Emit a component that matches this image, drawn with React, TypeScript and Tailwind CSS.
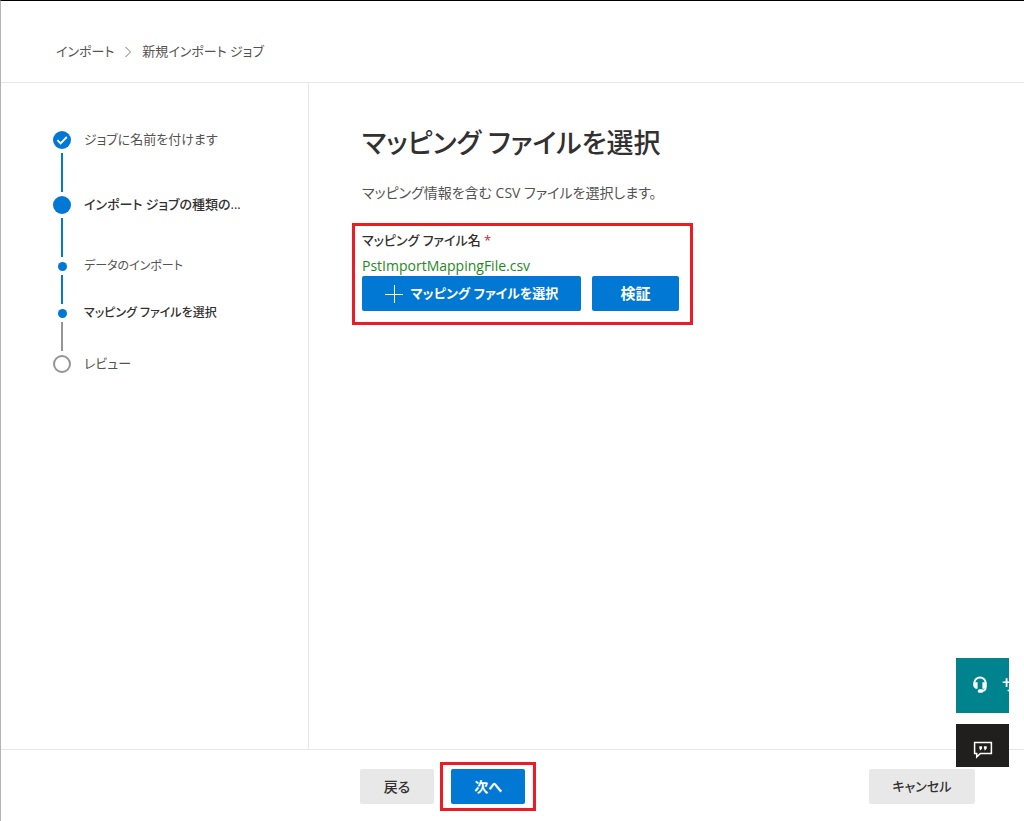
import { Fragment } from 'react';
import clsx from 'clsx';

type StepState = 'done' | 'current' | 'sub' | 'todo';

interface Step {
  label: string;
  state: StepState;
  bold?: boolean;
}

const STEPS: Step[] = [
  { label: 'ジョブに名前を付けます', state: 'done' },
  { label: 'インポート ジョブの種類の...', state: 'current', bold: true },
  { label: 'データのインポート', state: 'sub' },
  { label: 'マッピング ファイルを選択', state: 'sub', bold: true },
  { label: 'レビュー', state: 'todo' },
];

function StepMarker({ state }: { state: StepState }) {
  if (state === 'todo') {
    return <span className="size-[18px] rounded-full border-2 border-[#979593]" />;
  }
  if (state === 'sub') {
    return <span className="size-[9px] rounded-full bg-[#0078d4]" />;
  }
  return (
    <span className="flex size-[18px] items-center justify-center rounded-full bg-[#0078d4]">
      {state === 'done' && (
        <svg viewBox="0 0 18 18" className="size-[18px]" fill="none" stroke="white" strokeWidth="1.8">
          <path d="M4.4 9.2 7.6 12.4 13.8 6" />
        </svg>
      )}
    </span>
  );
}

function StepNav() {
  return (
    <nav aria-label="ステップ" className="w-[308px] shrink-0 border-r border-[#e6e6e6] pt-11 pl-[51px]">
      <ol>
        {STEPS.map((step, i) => {
          const small = step.state === 'sub';
          const next = STEPS[i + 1];
          return (
            <Fragment key={step.label}>
              <li className={clsx('flex items-center gap-3', small ? 'h-[18px]' : 'h-[26px]')}>
                <span className="flex w-5 shrink-0 justify-center">
                  <StepMarker state={step.state} />
                </span>
                <span
                  className={clsx(
                    'whitespace-nowrap',
                    small ? 'text-[12px]' : 'text-[13px]',
                    step.bold ? 'font-medium text-[#323130]' : 'text-[#555352]',
                  )}
                >
                  {step.label}
                </span>
              </li>
              {next && (
                <li aria-hidden="true" className="flex w-5 justify-center">
                  <span
                    className={clsx(
                      'w-0.5',
                      small ? 'h-[29px]' : 'h-[39px]',
                      next.state === 'todo' ? 'bg-[#979593]' : 'bg-[#0078d4]',
                    )}
                  />
                </li>
              )}
            </Fragment>
          );
        })}
      </ol>
    </nav>
  );
}

function SupportWidgets() {
  return (
    <div className="fixed right-[15px] bottom-[54px] flex w-[53px] flex-col gap-[11px]">
      <button
        type="button"
        aria-label="サポート"
        className="flex h-[55px] items-center gap-3.5 overflow-hidden bg-[#00838c] pb-0.5 pl-4 text-[15px] font-medium text-white"
      >
        <svg viewBox="0 0 16 18" className="h-[18px] w-4 shrink-0" fill="none" stroke="white">
          <path d="M2.4 10V6.6a5.6 5.2 0 0 1 11.2 0v4.6c0 2.2-1.2 3.6-3.6 3.6" strokeWidth="2" />
          <path d="M1.6 6.2h4v6.6H3.6L1.6 11zM10.4 6.2h4V11l-2 1.8h-2z" fill="white" stroke="none" />
          <rect x="5.8" y="13.2" width="5.4" height="3.6" rx="1.6" fill="white" stroke="none" />
        </svg>
        <span className="shrink-0">サ</span>
      </button>
      <button
        type="button"
        aria-label="フィードバック"
        className="flex h-[43px] items-center justify-center bg-[#201f1e] pt-2"
      >
        <svg viewBox="0 0 20 18" className="h-[18px] w-5" fill="none" stroke="white" strokeWidth="1.5">
          <path d="M1.6 1.6h16.8v10.8H7.4l-3.7 3.5v-3.5H1.6z" />
          <path d="M6.3 5.3h2.8v2.2L7.6 9.2h-1l.5-1.4h-.8zM10.9 5.3h2.8v2.2l-1.5 1.7h-1l.5-1.4h-.8z" fill="white" stroke="none" />
        </svg>
      </button>
    </div>
  );
}

export default function App() {
  return (
    <div className="flex min-h-screen flex-col border-t border-l border-t-black border-l-[#b5b5b5] bg-white font-['Open_Sans','Noto_Sans_CJK_JP',sans-serif] text-[#323130] [font-feature-settings:'palt']">
      <header className="flex h-[82px] items-center border-b border-[#e6e6e6] px-[55px] pt-5">
        <nav aria-label="階層リンク" className="flex items-center gap-2 text-[13px] text-[#555352]">
          <a href="#import">インポート</a>
          <svg viewBox="0 0 12 12" className="size-3" fill="none" stroke="#797775">
            <path d="M3.5 1 8.5 6l-5 5" />
          </svg>
          <span aria-current="page">新規インポート ジョブ</span>
        </nav>
      </header>

      <div className="flex flex-1">
        <StepNav />
        <main className="flex-1 px-[43px] pt-10">
          <h1 className="px-2.5 text-[27px] leading-10 font-medium">マッピング ファイルを選択</h1>
          <p className="mt-5 px-2.5 text-[14px] leading-5 text-[#555352]">
            マッピング情報を含む CSV ファイルを選択します。
          </p>
          <section className="mt-5 w-fit border-[3px] border-[#ed1c24] px-[7px] pt-1 pb-[11px]">
            <h2 className="text-[13px] leading-5 font-medium">
              マッピング ファイル名 <span className="text-[#c4262e]">*</span>
            </h2>
            <p className="mt-1.5 text-[14px] leading-5 text-[#1e8a1e]">PstImportMappingFile.csv</p>
            <div className="flex gap-[11px] pr-1 font-bold text-white">
              <button
                type="button"
                className="flex h-[35px] w-[219px] items-center justify-center gap-2 rounded-xs bg-[#0078d4] text-[13px]"
              >
                <svg viewBox="0 0 18 18" className="size-[18px]" fill="none" stroke="white">
                  <path d="M9.5 0v18M0 9.5h18" />
                </svg>
                マッピング ファイルを選択
              </button>
              <button type="button" className="h-[35px] w-[87px] rounded-xs bg-[#0078d4] text-[15px]">
                検証
              </button>
            </div>
          </section>
        </main>
      </div>

      <footer className="flex h-[72px] items-center border-t border-[#e6e6e6] pt-0.5 pr-[49px] pl-[359px]">
        <button type="button" className="h-[35px] w-[74px] rounded-xs bg-[#e8e8e8] text-[14px] font-medium">
          戻る
        </button>
        <span className="ml-1.5 border-[3px] border-[#ed1c24] px-2 py-1">
          <button type="button" className="block h-[35px] w-[74px] rounded-xs bg-[#0078d4] text-[14px] font-bold text-white">
            次へ
          </button>
        </span>
        <button type="button" className="ml-auto h-[35px] w-[106px] rounded-xs bg-[#e8e8e8] text-[13px] font-medium">
          キャンセル
        </button>
      </footer>

      <SupportWidgets />
    </div>
  );
}
